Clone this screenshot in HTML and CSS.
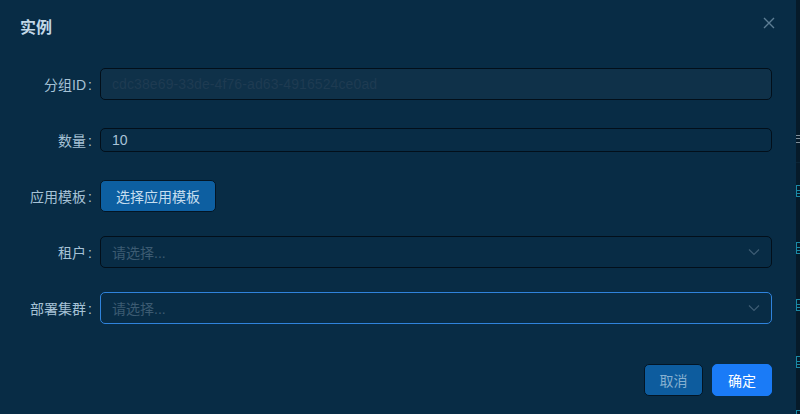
FILE: index.html
```html
<!DOCTYPE html>
<html lang="zh">
<head>
<meta charset="utf-8">
<title>实例</title>
<link rel="stylesheet" href="styles.css">
</head>
<body>
<div class="page">
  <div class="dialog">
    <div class="header">
      <div class="title">实例</div>
      <button class="close" aria-label="关闭">
        <svg width="12" height="12" viewBox="0 0 12 12"><path d="M1 1L11 11M11 1L1 11" stroke="#5d7d94" stroke-width="1.4" fill="none"/></svg>
      </button>
    </div>
    <div class="body">
      <div class="item">
        <label class="label">分组ID<span class="colon">:</span></label>
        <div class="control"><div class="input disabled">cdc38e69-33de-4f76-ad63-4916524ce0ad</div></div>
      </div>
      <div class="item">
        <label class="label">数量<span class="colon">:</span></label>
        <div class="control"><div class="input small">10</div></div>
      </div>
      <div class="item">
        <label class="label">应用模板<span class="colon">:</span></label>
        <div class="control"><button class="btn btn-tpl">选择应用模板</button></div>
      </div>
      <div class="item">
        <label class="label">租户<span class="colon">:</span></label>
        <div class="control"><div class="input select"><span class="ph">请选择...</span>
          <svg class="arrow" width="12" height="8" viewBox="0 0 12 8"><path d="M1 1.5L6 6.5L11 1.5" stroke="#3d5c73" stroke-width="1.2" fill="none"/></svg></div></div>
      </div>
      <div class="item">
        <label class="label">部署集群<span class="colon">:</span></label>
        <div class="control"><div class="input select focus"><span class="ph">请选择...</span>
          <svg class="arrow" width="12" height="8" viewBox="0 0 12 8"><path d="M1 1.5L6 6.5L11 1.5" stroke="#3d5c73" stroke-width="1.2" fill="none"/></svg></div></div>
      </div>
    </div>
    <div class="footer">
      <button class="btn btn-cancel">取消</button>
      <button class="btn btn-ok">确定</button>
    </div>
  </div>
  <div class="behind">
    <div class="frag frag-grey"></div>
    <div class="frag frag-line l1"></div>
    <div class="frag frag-cyan r1"></div>
    <div class="frag frag-cyan r2"></div>
    <div class="frag frag-cyan r3"></div>
    <div class="frag frag-cyan r4"></div>
    <div class="frag frag-cyan r5"></div>
  </div>
</div>
</body>
</html>
```
FILE: styles.css
```css
html, body {
  margin: 0;
  padding: 0;
  background: #082c45;
  font-family: "Liberation Sans", "Noto Sans CJK SC", sans-serif;
  font-size: 14px;
}
.page {
  display: flex;
  width: 800px;
  height: 414px;
  overflow: hidden;
}
.dialog {
  width: 796px;
  height: 414px;
  background: #082c45;
  display: flex;
  flex-direction: column;
}
.header {
  height: 56px;
  display: flex;
  justify-content: space-between;
  align-items: flex-start;
  padding: 0 20px 0 20px;
}
.title {
  margin-top: 17px;
  font-size: 16px;
  font-weight: bold;
  line-height: 22px;
  color: #c2d8e8;
}
.close {
  background: none;
  border: 0;
  padding: 0;
  margin-top: 17px;
  margin-right: 1px;
  width: 12px;
  height: 12px;
  display: flex;
  cursor: pointer;
}
.body {
  padding: 12px 24px 0 0;
  display: flex;
  flex-direction: column;
  gap: 24px;
}
.item {
  display: flex;
  align-items: center;
  height: 32px;
}
.label {
  width: 92px;
  text-align: right;
  color: #a6c2d6;
  margin-right: 8px;
  white-space: nowrap;
}
.colon {
  margin-left: 2px;
}
.control {
  flex: 1;
  display: flex;
  align-items: center;
}
.input {
  box-sizing: border-box;
  width: 100%;
  height: 32px;
  border: 1px solid #020f1a;
  border-radius: 5px;
  padding: 0 11px;
  display: flex;
  align-items: center;
  color: #a9c4d8;
  background: #082c45;
}
.input.small {
  height: 24px;
}
.input.disabled {
  background: #0f3149;
  color: #1e3b52;
  letter-spacing: 0.1px;
}
.input.select {
  justify-content: space-between;
}
.input.focus {
  border-color: #2f83dc;
}
.ph {
  color: #3c5b72;
}
.btn {
  box-sizing: border-box;
  height: 32px;
  border-radius: 5px;
  font-family: "Liberation Sans", "Noto Sans CJK SC", sans-serif;
  font-size: 14px;
  padding: 0 15px;
  cursor: pointer;
}
.btn-tpl {
  background: #0d5fa1;
  border: 1px solid #031524;
  color: #c6deef;
}
.footer {
  margin-top: 40px;
  display: flex;
  justify-content: flex-end;
  gap: 9px;
  padding-right: 24px;
}
.btn-cancel {
  background: #0d5c9e;
  border: 1px solid #031524;
  color: #86b0d0;
  width: 59px;
  padding: 0;
}
.btn-ok {
  background: #1a7bf7;
  border: 1px solid #1a7bf7;
  color: #ffffff;
  width: 60px;
  padding: 0;
}
.behind {
  width: 4px;
  height: 414px;
  background: #061b2a;
  position: relative;
}
.frag {
  position: absolute;
  left: 0;
}
.frag-grey {
  top: 135px;
  width: 4px;
  height: 8px;
  background: linear-gradient(#7d8e9a 0 1px, transparent 1px 3px, #7d8e9a 3px 4px, transparent 4px 7px, #7d8e9a 7px 8px);
}
.frag-line {
  height: 1px;
  width: 4px;
  background: #0b2536;
}
.l1 { top: 162px; }
.frag-cyan {
  box-sizing: border-box;
  width: 4px;
  height: 12px;
  border: 1px solid #1a8aa6;
  border-right: 0;
  background: linear-gradient(transparent 0 4px, #1a8aa6 4px 5px, transparent 5px 7px, #1a8aa6 7px 8px, transparent 8px);
}
.r1 { top: 185px; }
.r2 { top: 242px; }
.r3 { top: 299px; }
.r4 { top: 356px; }
.r5 { top: 410px; }
```
